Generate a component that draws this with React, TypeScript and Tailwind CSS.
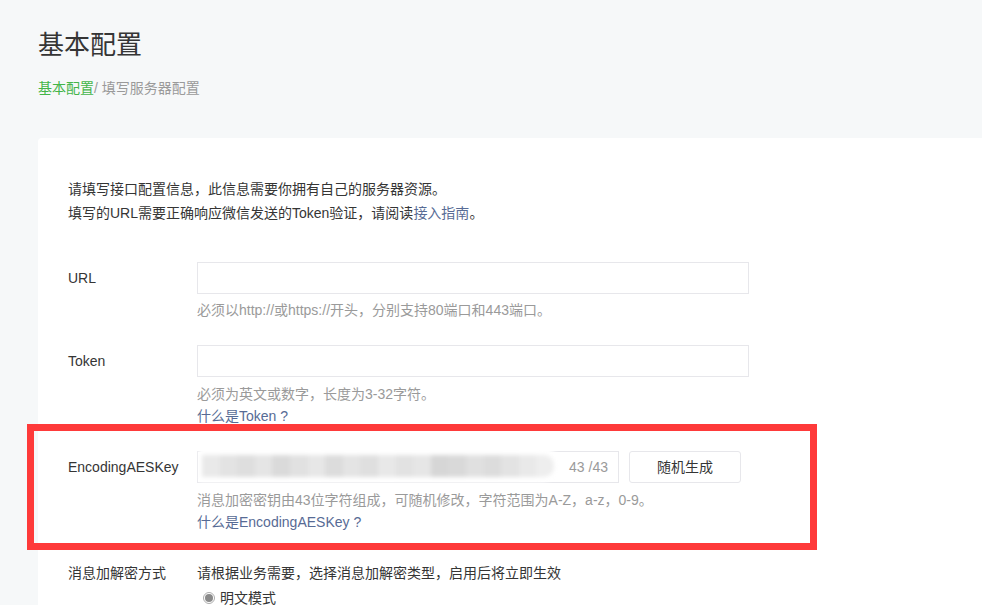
const font = "font-['Liberation_Sans','Noto_Sans_CJK_SC',sans-serif]"

const maskShades = [
  'bg-[#e9e9e9]', 'bg-[#e3e3e3]', 'bg-[#dedede]', 'bg-[#e5e5e5]', 'bg-[#dadada]',
  'bg-[#e1e1e1]', 'bg-[#e7e7e7]', 'bg-[#dcdcdc]', 'bg-[#e4e4e4]', 'bg-[#dfdfdf]',
  'bg-[#e8e8e8]', 'bg-[#e2e2e2]', 'bg-[#e6e6e6]', 'bg-[#d6d6d6]', 'bg-[#d9d9d9]',
  'bg-[#e0e0e0]', 'bg-[#dcdcdc]', 'bg-[#e3e3e3]', 'bg-[#e9e9e9]', 'bg-[#eeeeee]',
]

function Row({ label, children }: { label: string; children: React.ReactNode }) {
  return (
    <div className="flex">
      <div className="w-[129px] shrink-0 leading-[32px] text-[#353535]">{label}</div>
      <div className="flex-1">{children}</div>
    </div>
  )
}

function Help({ children }: { children: React.ReactNode }) {
  return <p className="leading-[22px] text-[#9a9a9a]">{children}</p>
}

function Link({ children }: { children: React.ReactNode }) {
  return <a className="leading-[22px] text-[#576b95] cursor-pointer">{children}</a>
}

export default function App() {
  return (
    <div className={`relative h-[605px] w-full overflow-hidden bg-[#f6f8f9] text-[14px] ${font}`}>
      <div className="pl-[38px] pt-[27px]">
        <h1 className="text-[26px] leading-[36px] font-normal text-[#353535]">基本配置</h1>
        <div className="mt-[14px] leading-[22px]">
          <span className="text-[#44b549]">基本配置</span>
          <span className="text-[#9a9a9a]">/ 填写服务器配置</span>
        </div>

        <div className="mt-[39px] w-[1000px] rounded-[4px] bg-white px-[30px] pt-[39px] pb-10">
          <div className="leading-[24px] text-[#353535]">
            <p>请填写接口配置信息，此信息需要你拥有自己的服务器资源。</p>
            <p>
              填写的URL需要正确响应微信发送的Token验证，请阅读
              <span className="text-[#576b95]">接入指南</span>。
            </p>
          </div>

          <div className="mt-[37px] flex flex-col gap-[24px]">
            <Row label="URL">
              <input className="block h-[32px] w-[552px] border border-[#e7e7eb] bg-white px-2 outline-none" />
              <div className="mt-[5px]">
                <Help>必须以http://或https://开头，分别支持80端口和443端口。</Help>
              </div>
            </Row>

            <Row label="Token">
              <input className="block h-[32px] w-[552px] border border-[#e7e7eb] bg-white px-2 outline-none" />
              <div className="mt-[6px] flex flex-col">
                <Help>必须为英文或数字，长度为3-32字符。</Help>
                <Link>什么是Token ?</Link>
              </div>
            </Row>

            <Row label="EncodingAESKey">
              <div className="flex items-center gap-[10px]">
                <div className="relative flex h-[32px] w-[422px] items-center justify-end border border-[#e7e7eb] bg-white pr-[10px]">
                  <span className="text-[#9a9a9a]">43 /43</span>
                  <div className="absolute -top-[6px] left-[1px] h-[36px] w-[360px] rounded-r-[18px] bg-white blur-[2px]">
                    <div className="mt-[9px] ml-[3px] flex h-[22px] w-[352px] overflow-hidden rounded-r-[10px]">
                      {maskShades.map((c, i) => (
                        <div key={i} className={`h-full flex-1 ${c}`} />
                      ))}
                    </div>
                  </div>
                </div>
                <button className="h-[32px] w-[112px] rounded-[3px] border border-[#e7e7eb] bg-white text-[#353535]">
                  随机生成
                </button>
              </div>
              <div className="mt-[6px] flex flex-col">
                <Help>消息加密密钥由43位字符组成，可随机修改，字符范围为A-Z，a-z，0-9。</Help>
                <Link>什么是EncodingAESKey ?</Link>
              </div>
            </Row>

            <Row label="消息加解密方式">
              <p className="leading-[32px] text-[#353535]">请根据业务需要，选择消息加解密类型，启用后将立即生效</p>
              <label className="flex items-center gap-[5px] pl-[6px] leading-[18px] text-[#353535]">
                <span className="flex h-[12px] w-[12px] items-center justify-center rounded-full border border-[#adadad] bg-white">
                  <span className="h-[8px] w-[8px] rounded-full bg-[#8a8a8a]" />
                </span>
                明文模式
              </label>
            </Row>
          </div>
        </div>
      </div>

      <div className="pointer-events-none absolute left-[27px] top-[424px] h-[126px] w-[790px] border-[7px] border-[#fe3a3a]" />
    </div>
  )
}
